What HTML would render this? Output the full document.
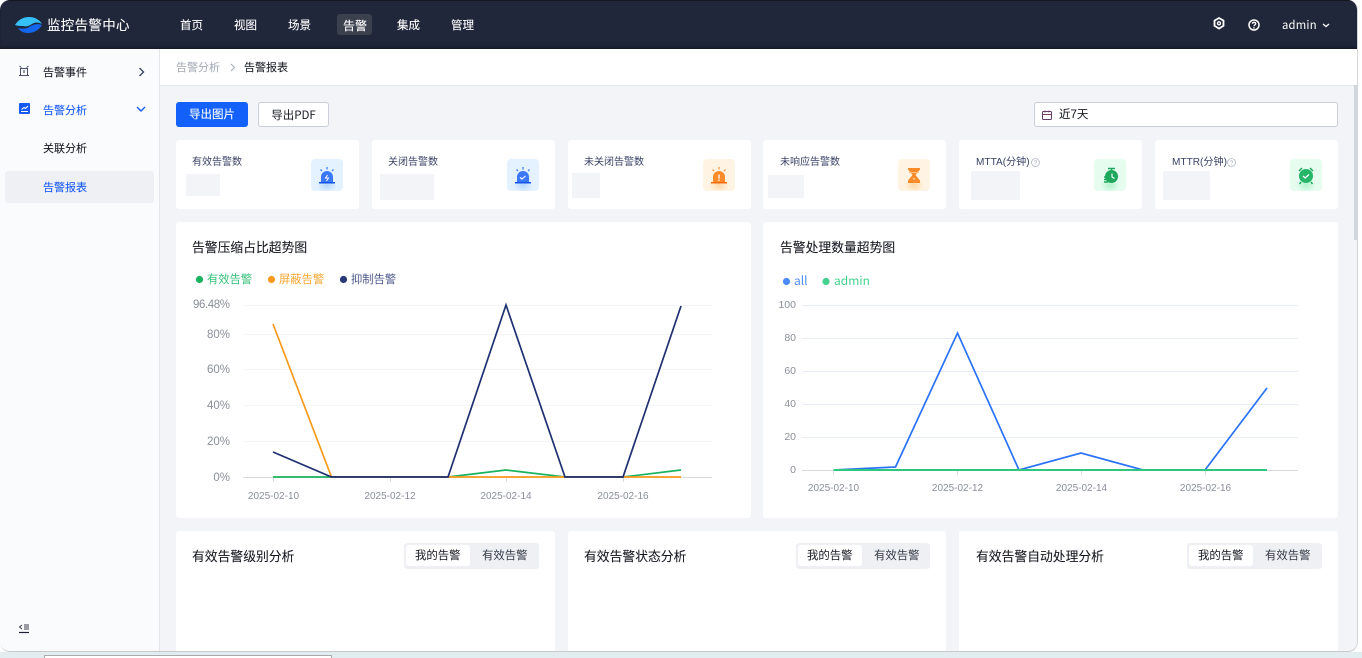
<!DOCTYPE html>
<html lang="zh"><head><meta charset="utf-8"><title>监控告警中心</title>
<style>
*{box-sizing:border-box;margin:0;padding:0}
html,body{width:1362px;height:658px;overflow:hidden;background:#fff;font-family:"Liberation Sans","Noto Sans CJK SC",sans-serif;}
.a{position:absolute;white-space:nowrap}
#strip{position:absolute;left:0;top:652px;width:1362px;height:6px;background:#e2edf1}
#box{position:absolute;left:44px;top:655px;width:288px;height:3px;background:#fff;border:1px solid #aaa;border-bottom:0}
#win{position:absolute;left:0;top:0;width:1358px;height:652px;background:#f3f4f8;border-radius:10px;overflow:hidden;border-bottom:1px solid #c9c9c9;border-right:1px solid #d4d6da}
#head{position:absolute;left:0;top:0;width:100%;height:49px;background:#20273a;border-top:1px solid #14161d;box-shadow:inset 0 -3px 3px -2px #12151f}
#side{position:absolute;left:0;top:49px;width:160px;height:603px;background:#fafbfd;border-right:1px solid #e4e6eb}
#crumb{position:absolute;left:160px;top:49px;width:1198px;height:37px;background:#fff;border-bottom:1px solid #e4e6eb}
.nav{color:#fff;font-size:11.5px;top:19px;line-height:15px;-webkit-text-stroke:.1px #fff}
.m{font-size:11px;line-height:15px;color:#1a1d26;-webkit-text-stroke:.08px currentColor}
.card{position:absolute;background:#fff;border-radius:3px}
.lab{font-size:10px;line-height:14px;color:#3a4266}
.sk{position:absolute;background:#f3f4f8}
.ic{position:absolute;width:32px;height:32px;border-radius:4px;top:159px}
.tt{font-size:12.8px;line-height:18px;color:#15171f;-webkit-text-stroke:.08px currentColor}
.seg{position:absolute;top:543px;height:26px;background:#eef0f4;border-radius:3px}
.seg i{position:absolute;left:2px;top:2px;height:21px;background:#fff;border-radius:3px}
.seg b{position:absolute;top:5px;font-weight:400;font-size:11.4px;line-height:16px;white-space:nowrap}
svg{position:absolute;overflow:visible}
svg text{font-family:"Liberation Sans",sans-serif}
</style></head><body>
<div id="strip"></div><div id="box"></div>
<div id="win">
<div id="head"></div>
<svg style="left:15px;top:16px" width="28" height="18" viewBox="0 0 28 18">
<path d="M0 9C3 4 8 1 14 1c5 0 10 2 13 7-4-2-7-2-10 0-3 2-6 3-9 2-3 0-5 0-8-1z" fill="#36c0f8"/>
<path d="M27 9c-3 5-8 8-14 8-5 0-8-2-10-5 4 1 8 1 11-1 3-2 6-3 9-3z" fill="#1566ee"/>
</svg>
<div class="a" style="left:47px;top:17px;color:#fff;font-size:13.5px;line-height:18px;letter-spacing:.3px;-webkit-text-stroke:.1px #fff">监控告警中心</div>
<div class="a nav" style="left:180px">首页</div>
<div class="a nav" style="left:234px">视图</div>
<div class="a nav" style="left:288px">场景</div>
<div class="a" style="left:337px;top:14px;width:35px;height:21px;background:#3b404e;border-radius:3px"></div>
<div class="a nav" style="left:343px;font-size:12px">告警</div>
<div class="a nav" style="left:397px">集成</div>
<div class="a nav" style="left:451px">管理</div>
<svg style="left:1213px;top:17px" width="12" height="13" viewBox="0 0 12 13"><path d="M6 1l4.500 2.600v5.200L6 11.600 1.500 8.800V3.600z" fill="none" stroke="#fff" stroke-width="1.800"/><circle cx="6" cy="6.300" r="1.500" fill="none" stroke="#fff" stroke-width="1.300"/></svg>
<svg style="left:1248px;top:19px" width="12" height="12" viewBox="0 0 12 12"><circle cx="6" cy="6" r="5" fill="none" stroke="#fff" stroke-width="1.500"/><path d="M4.400 4.800C4.500 3.800 5.200 3.300 6 3.300c1 0 1.700.6 1.700 1.400 0 1.200-1.700 1.200-1.700 2.500" fill="none" stroke="#fff" stroke-width="1.300"/><circle cx="6" cy="8.900" r=".8" fill="#fff"/></svg>
<div class="a" style="left:1282px;top:17px;color:#fff;font-size:11.300px;line-height:16px;letter-spacing:.2px;font-family:'Noto Sans CJK SC',sans-serif">admin</div>
<svg style="left:1322px;top:23px" width="8" height="5" viewBox="0 0 8 5"><path d="M1 1l3 2.500L7 1" fill="none" stroke="#fff" stroke-width="1.300"/></svg>

<div id="side"></div>
<svg style="left:18px;top:65px" width="12" height="12" viewBox="0 0 12 12"><path d="M1 10.500h10M2.500 10.500V3.500h7v7M1.500 1l2 1.500M10.500 1l-2 1.500" fill="none" stroke="#4a5068" stroke-width="1"/><path d="M6 5v3" stroke="#4a5068" stroke-width="1.200"/></svg>
<div class="a m" style="left:43px;top:66px">告警事件</div>
<svg style="left:138px;top:67px" width="7" height="10" viewBox="0 0 7 10"><path d="M1.500 1l4 4-4 4" fill="none" stroke="#3c4560" stroke-width="1.400"/></svg>
<svg style="left:19px;top:103px" width="11" height="11" viewBox="0 0 11 11"><rect width="11" height="11" rx="1" fill="#1659f5"/><path d="M2 8.500h7M2.500 6.500L5 4.500l1.500 1L9 3" fill="none" stroke="#fff" stroke-width="1.100"/></svg>
<div class="a m" style="left:43px;top:104px;color:#1659f5">告警分析</div>
<svg style="left:136px;top:106px" width="10" height="7" viewBox="0 0 10 7"><path d="M1 1l4 4 4-4" fill="none" stroke="#1659f5" stroke-width="1.400"/></svg>
<div class="a m" style="left:43px;top:142px">关联分析</div>
<div class="a" style="left:5px;top:171px;width:149px;height:32px;background:#eff0f4;border-radius:3px"></div>
<div class="a m" style="left:43px;top:181px;color:#1659f5">告警报表</div>
<svg style="left:18px;top:623px" width="12" height="11" viewBox="0 0 12 11"><path d="M4 2L1.500 4 4 6M6 2h5M6 4h5M6 6h5" fill="none" stroke="#3a3f50" stroke-width="1"/><path d="M1 9.500h10" stroke="#1d2030" stroke-width="1.200"/></svg>

<div id="crumb"></div>
<div class="a m" style="left:176px;top:61px;color:#a8aeba">告警分析</div>
<svg style="left:230px;top:63px" width="6" height="9" viewBox="0 0 6 9"><path d="M1 1l3.500 3.500L1 8" fill="none" stroke="#a8aeba" stroke-width="1.100"/></svg>
<div class="a m" style="left:244px;top:61px">告警报表</div>
<div class="a" style="left:1354px;top:85px;width:4px;height:155px;background:#d3d5dc"></div>

<div class="a" style="left:176px;top:102px;width:72px;height:25px;background:#1360fb;border-radius:3px;color:#fff;font-size:11.500px;line-height:27px;text-align:center;-webkit-text-stroke:.1px #fff">导出图片</div>
<div class="a" style="left:258px;top:102px;width:71px;height:25px;background:#fff;border:1px solid #c9ced9;border-radius:3px;color:#1a1d26;font-size:11.500px;line-height:25px;text-align:center;font-family:'Noto Sans CJK SC',sans-serif">导出PDF</div>
<div class="a" style="left:1034px;top:102px;width:304px;height:25px;background:#fff;border:1px solid #c9ced9;border-radius:3px"></div>
<svg style="left:1042px;top:110px" width="10" height="10" viewBox="0 0 10 10"><rect x=".5" y="1.500" width="9" height="8" rx="1" fill="none" stroke="#5b3d66" stroke-width="1"/><path d="M.5 4.500h9M3 .5v2M7 .5v2" stroke="#7a3e5a" stroke-width="1"/></svg>
<div class="a m" style="left:1059px;top:108px;font-size:11.500px">近7天</div>

<div class="card" style="left:176px;top:140px;width:183px;height:69px"></div>
<div class="card" style="left:372px;top:140px;width:183px;height:69px"></div>
<div class="card" style="left:568px;top:140px;width:183px;height:69px"></div>
<div class="card" style="left:763px;top:140px;width:183px;height:69px"></div>
<div class="card" style="left:959px;top:140px;width:183px;height:69px"></div>
<div class="card" style="left:1155px;top:140px;width:183px;height:69px"></div>
<div class="a lab" style="left:192px;top:156px">有效告警数</div>
<div class="a lab" style="left:388px;top:156px">关闭告警数</div>
<div class="a lab" style="left:584px;top:156px">未关闭告警数</div>
<div class="a lab" style="left:780px;top:156px">未响应告警数</div>
<div class="a lab" style="left:976px;top:156px;font-size:10.100px">MTTA(分钟)</div>
<div class="a lab" style="left:1172px;top:156px;font-size:10.100px">MTTR(分钟)</div>
<svg style="left:1031px;top:158px" width="9" height="9" viewBox="0 0 9 9"><circle cx="4.500" cy="4.500" r="4" fill="none" stroke="#b4b9c6" stroke-width=".8"/><path d="M3.300 3.600c.1-.7.6-1 1.200-1 .7 0 1.200.4 1.200 1 0 .9-1.200.9-1.200 1.800M4.500 6.300v.6" fill="none" stroke="#b4b9c6" stroke-width=".7"/></svg>
<svg style="left:1227px;top:158px" width="9" height="9" viewBox="0 0 9 9"><circle cx="4.500" cy="4.500" r="4" fill="none" stroke="#b4b9c6" stroke-width=".8"/><path d="M3.300 3.600c.1-.7.6-1 1.200-1 .7 0 1.200.4 1.200 1 0 .9-1.200.9-1.200 1.800M4.500 6.300v.6" fill="none" stroke="#b4b9c6" stroke-width=".7"/></svg>
<div class="sk" style="left:186px;top:174px;width:34px;height:22px"></div>
<div class="sk" style="left:380px;top:174px;width:54px;height:26px"></div>
<div class="sk" style="left:572px;top:173px;width:28px;height:25px"></div>
<div class="sk" style="left:768px;top:175px;width:36px;height:23px"></div>
<div class="sk" style="left:971px;top:171px;width:49px;height:29px"></div>
<div class="sk" style="left:1163px;top:171px;width:47px;height:29px"></div>

<div class="ic" style="left:311px;background:radial-gradient(ellipse 10px 7px at 50% 82%,#b4d8ff,#e4f1ff)"></div>
<svg style="left:311px;top:159px" width="32" height="32" viewBox="0 0 32 32"><path d="M10 23v-5a6 6 0 0 1 12 0v5z" fill="#3a78f7"/><rect x="8" y="23" width="16" height="1.500" fill="#1252ee"/><path d="M16 8v2.500M9.500 10.500l1.500 1.500M22.500 10.500L21 12" stroke="#3f80f5" stroke-width="1.300"/><path d="M16.500 16l-2 3h3l-2 3" fill="none" stroke="#fff" stroke-width="1"/></svg>
<div class="ic" style="left:507px;background:radial-gradient(ellipse 10px 7px at 50% 82%,#b4d8ff,#e4f1ff)"></div>
<svg style="left:507px;top:159px" width="32" height="32" viewBox="0 0 32 32"><path d="M10 23v-5a6 6 0 0 1 12 0v5z" fill="#3a78f7"/><rect x="8" y="23" width="16" height="1.500" fill="#1252ee"/><path d="M16 8v2.500M9.500 10.500l1.500 1.500M22.500 10.500L21 12" stroke="#3f80f5" stroke-width="1.300"/><path d="M13 18.500l2 1.500 3.500-3" fill="none" stroke="#fff" stroke-width="1.100"/></svg>
<div class="ic" style="left:703px;background:radial-gradient(ellipse 10px 7px at 50% 82%,#ffd9a8,#fff4e3)"></div>
<svg style="left:703px;top:159px" width="32" height="32" viewBox="0 0 32 32"><path d="M10 23v-5a6 6 0 0 1 12 0v5z" fill="#fb8a28"/><rect x="8" y="23" width="16" height="1.500" fill="#f56d0a"/><path d="M16 8v2.500M9.500 10.500l1.500 1.500M22.500 10.500L21 12" stroke="#fb9a4a" stroke-width="1.300"/><path d="M16 15.500v4M16 20.500v1.500" stroke="#fff" stroke-width="1.300"/></svg>
<div class="ic" style="left:898px;background:radial-gradient(ellipse 10px 7px at 50% 82%,#ffd9a8,#fff4e3)"></div>
<svg style="left:898px;top:159px" width="32" height="32" viewBox="0 0 32 32"><path d="M10 9h12v1.500l-4.500 5.500 4.500 5.500V24H10v-2.500l4.500-5.500L10 10.500z" fill="#fb8a28"/><rect x="11" y="13" width="10" height="1" fill="#ffc08a"/><path d="M16 19v1.500" stroke="#fff" stroke-width="1.200"/></svg>
<div class="ic" style="left:1094px;background:radial-gradient(ellipse 10px 7px at 50% 82%,#b3f2cf,#e5fcef)"></div>
<svg style="left:1094px;top:159px" width="32" height="32" viewBox="0 0 32 32"><circle cx="17.500" cy="17.500" r="6.500" fill="#1fa85d"/><path d="M14 9.500h7M17.500 9.500V11" stroke="#1fa85d" stroke-width="1.400"/><path d="M10 18h4M10 20.500h4M10 23h4" stroke="#1fa85d" stroke-width="1.500"/><path d="M18 14.500V18l2.500 1.500" fill="none" stroke="#fff" stroke-width="1.100"/></svg>
<div class="ic" style="left:1290px;background:radial-gradient(ellipse 10px 7px at 50% 82%,#b3f2cf,#e5fcef)"></div>
<svg style="left:1290px;top:159px" width="32" height="32" viewBox="0 0 32 32"><circle cx="16" cy="17" r="7" fill="#26b669"/><path d="M9 12l3-3M23 12l-3-3M11 23l-1.500 2M21 23l1.500 2" stroke="#1fa85d" stroke-width="1.500"/><path d="M13 17l2.200 2 3.800-3.500" fill="none" stroke="#fff" stroke-width="1.300"/></svg>

<div class="card" style="left:176px;top:222px;width:575px;height:296px"></div>
<div class="card" style="left:763px;top:222px;width:575px;height:296px"></div>
<div class="a tt" style="left:192px;top:239px">告警压缩占比超势图</div>
<div class="a tt" style="left:780px;top:239px">告警处理数量超势图</div>

<svg style="left:0;top:0" width="1358" height="652" viewBox="0 0 1358 652">
<circle cx="199.500" cy="279.500" r="3.600" fill="#1ab35f"/>
<circle cx="271.500" cy="279.500" r="3.600" fill="#fa9a1c"/>
<circle cx="343.500" cy="279.500" r="3.600" fill="#2a3a78"/>
<circle cx="786.500" cy="281.500" r="3.600" fill="#4b8bfa"/>
<circle cx="826" cy="281.500" r="3.600" fill="#43d18d"/>
<g stroke="#f3f5fa" stroke-width="1"><path d="M243 305.500H712M243 334.500H712M243 369.500H712M243 405.500H712M243 441.500H712"/></g>
<path d="M243 477.500H712" stroke="#d9dbe2"/>
<path d="M273.500 477v5M390.500 477v5M506.500 477v5M623.500 477v5" stroke="#d9dbe2"/>
<g font-size="11.500" fill="#8a8e99" text-anchor="end"><text x="230" y="308" textLength="37">96.48%</text><text x="230" y="338">80%</text><text x="230" y="373">60%</text><text x="230" y="409">40%</text><text x="230" y="445">20%</text><text x="230" y="481">0%</text></g>
<g font-size="10" fill="#8a8e99" text-anchor="middle"><text x="273.500" y="499">2025-02-10</text><text x="390" y="499">2025-02-12</text><text x="506" y="499">2025-02-14</text><text x="623" y="499">2025-02-16</text></g>
<polyline points="273,477 331.500,477 390,477 448,477 506,470 565,477 623,477 681,470" fill="none" stroke="#1ab35f" stroke-width="1.700"/>
<polyline points="273,324 331.500,477 390,477 448,477 506,477 565,477 623,477 681,477" fill="none" stroke="#fa9a1c" stroke-width="1.700"/>
<polyline points="273,452 331.500,477 390,477 448,477 506,305 565,477 623,477 681,306" fill="none" stroke="#1f3070" stroke-width="1.700"/>

<g stroke="#e8ecf5" stroke-width="1"><path d="M802 305.500H1298M802 338.500H1298M802 371.500H1298M802 404.500H1298M802 437.500H1298"/></g>
<path d="M802 470.500H1298" stroke="#d9dbe2"/>
<path d="M833.500 470v5M957.500 470v5M1081.500 470v5M1205.500 470v5" stroke="#d9dbe2"/>
<g font-size="10.500" fill="#8a8e99" text-anchor="end"><text x="796" y="308">100</text><text x="796" y="341">80</text><text x="796" y="374">60</text><text x="796" y="407">40</text><text x="796" y="440">20</text><text x="796" y="473">0</text></g>
<g font-size="10" fill="#8a8e99" text-anchor="middle"><text x="833.500" y="491">2025-02-10</text><text x="957.500" y="491">2025-02-12</text><text x="1081.500" y="491">2025-02-14</text><text x="1205.500" y="491">2025-02-16</text></g>
<polyline points="833.500,470 895.500,467 957.500,333 1019,470 1081,453 1143,470 1205,470 1267,388" fill="none" stroke="#2a72f8" stroke-width="1.700"/>
<path d="M833.500 470H1267" stroke="#2fc77f" stroke-width="2"/>
</svg>
<div class="a" style="left:207px;top:273px;font-size:11.300px;line-height:15px;color:#35c07a">有效告警</div>
<div class="a" style="left:279px;top:273px;font-size:11.300px;line-height:15px;color:#faa530">屏蔽告警</div>
<div class="a" style="left:351px;top:273px;font-size:11.300px;line-height:15px;color:#4c5a8c">抑制告警</div>
<div class="a" style="left:794px;top:273px;font-size:12px;line-height:15px;color:#4b8bfa;font-family:'Noto Sans CJK SC',sans-serif">all</div>
<div class="a" style="left:834px;top:273px;font-size:12px;line-height:15px;color:#43d18d;font-family:'Noto Sans CJK SC',sans-serif">admin</div>

<div class="card" style="left:176px;top:531px;width:379px;height:130px"></div>
<div class="card" style="left:568px;top:531px;width:378px;height:130px"></div>
<div class="card" style="left:959px;top:531px;width:379px;height:130px"></div>
<div class="a tt" style="left:192px;top:548px">有效告警级别分析</div>
<div class="a tt" style="left:584px;top:548px">有效告警状态分析</div>
<div class="a tt" style="left:976px;top:548px">有效告警自动处理分析</div>
<div class="seg" style="left:404px;width:135px"><i style="width:64px"></i><b style="left:11px;color:#15171f">我的告警</b><b style="left:78px;color:#333845">有效告警</b></div>
<div class="seg" style="left:796px;width:134px"><i style="width:64px"></i><b style="left:11px;color:#15171f">我的告警</b><b style="left:78px;color:#333845">有效告警</b></div>
<div class="seg" style="left:1187px;width:135px"><i style="width:64px"></i><b style="left:11px;color:#15171f">我的告警</b><b style="left:78px;color:#333845">有效告警</b></div>
</div>
</body></html>
